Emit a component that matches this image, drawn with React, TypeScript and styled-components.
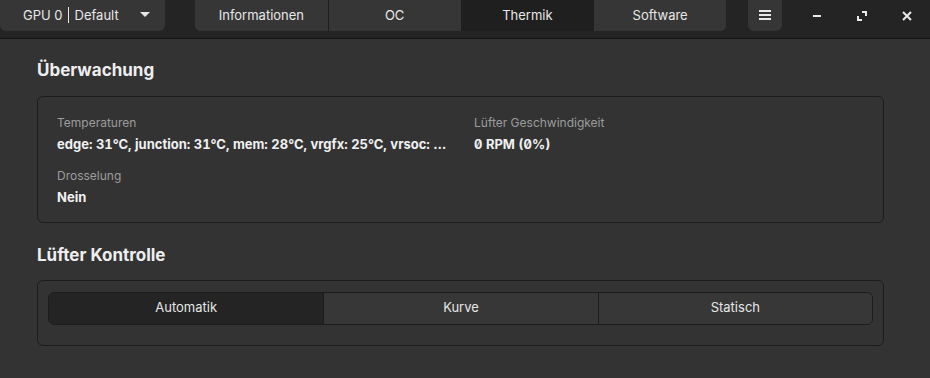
import React, { useState } from 'react';
import styled, { createGlobalStyle } from 'styled-components';

const GlobalStyle = createGlobalStyle`
  html, body {
    margin: 0;
    padding: 0;
    background: #333333;
    font-family: Inter, "Noto Sans", "DejaVu Sans", sans-serif;
    color: #eeeeee;
  }
  * { box-sizing: border-box; }
`;

const Window = styled.div`
  width: 930px;
  height: 378px;
  display: flex;
  flex-direction: column;
  background: #333333;
  overflow: hidden;
`;

const HeaderBar = styled.div`
  height: 39px;
  flex-shrink: 0;
  display: flex;
  align-items: flex-start;
  background: #242424;
  border-bottom: 1px solid #141414;
`;

const HeaderButton = styled.button<{ $width: number }>`
  width: ${p => p.$width}px;
  height: 31px;
  border: none;
  border-radius: 0 0 6px 6px;
  background: #363636;
  color: #e8e8e8;
  font-family: inherit;
  font-size: 13px;
  display: flex;
  align-items: center;
  justify-content: center;
  padding: 0 0 2px;
`;

const GpuButton = styled(HeaderButton)`
  justify-content: flex-start;
  padding-left: 23px;
`;

const Divider = styled.span`
  display: inline-block;
  width: 1px;
  height: 16px;
  background: #e8e8e8;
  margin: 0 6px 0 5px;
`;

const Caret = styled.span`
  margin-left: 21px;
  width: 0;
  height: 0;
  border-left: 5px solid transparent;
  border-right: 5px solid transparent;
  border-top: 5px solid #e8e8e8;
`;

const TabStrip = styled.div`
  margin-left: 30px;
  width: 531px;
  height: 31px;
  display: grid;
  grid-template-columns: repeat(4, 1fr);
  border-radius: 0 0 6px 6px;
  overflow: hidden;
  background: #363636;
`;

const Tab = styled.button<{ $active?: boolean }>`
  border: none;
  border-left: 1px solid #1f1f1f;
  &:first-child { border-left: none; }
  background: ${p => (p.$active ? '#1f1f1f' : '#363636')};
  color: #e8e8e8;
  font-family: inherit;
  font-size: 13px;
  padding: 0 0 2px;
`;

const MenuButton = styled(HeaderButton)`
  margin-left: 22px;
`;

const Controls = styled.div`
  display: flex;
  margin-left: 12px;
`;

const ControlButton = styled.div`
  width: 45px;
  height: 31px;
  display: flex;
  align-items: center;
  justify-content: center;
`;

const Content = styled.div`
  flex: 1;
  padding: 0 46px 0 37px;
`;

const SectionTitle = styled.h2<{ $top: number }>`
  margin: 0;
  padding-top: ${p => p.$top}px;
  height: 57px;
  font-size: 17px;
  font-weight: 700;
  color: #eeeeee;
  line-height: 20px;
`;

const Card = styled.div`
  border: 1px solid #1c1c1c;
  border-radius: 6px;
`;

const InfoGrid = styled.div`
  display: grid;
  grid-template-columns: 391px 1fr;
  column-gap: 26px;
  row-gap: 16px;
  padding: 18px 19px 17px;
`;

const Field = styled.div`
  display: flex;
  flex-direction: column;
  gap: 5px;
  min-width: 0;
`;

const Label = styled.div`
  font-size: 12px;
  line-height: 16px;
  color: #9c9c9c;
`;

const Value = styled.div`
  font-size: 13px;
  font-weight: 700;
  line-height: 16px;
  color: #f0f0f0;
  white-space: nowrap;
  font-feature-settings: "tnum", "zero";
`;

const FanCard = styled(Card)`
  padding: 11px 10px 20px;
`;

const Segmented = styled.div`
  display: grid;
  grid-template-columns: repeat(3, 1fr);
  height: 33px;
  border: 1px solid #1c1c1c;
  border-radius: 6px;
  overflow: hidden;
`;

const Segment = styled.button<{ $active?: boolean }>`
  border: none;
  border-left: 1px solid #1c1c1c;
  &:first-child { border-left: none; }
  background: ${p => (p.$active ? '#242424' : '#373737')};
  color: #e6e6e6;
  font-family: inherit;
  font-size: 13px;
  padding: 0 0 3px;
`;

const tabs = ['Informationen', 'OC', 'Thermik', 'Software'];
const modes = ['Automatik', 'Kurve', 'Statisch'];

export default function App() {
  const [tab, setTab] = useState('Thermik');
  const [mode, setMode] = useState('Automatik');

  return (
    <Window>
      <GlobalStyle />
      <HeaderBar>
        <GpuButton $width={165}>
          GPU 0<Divider />Default
          <Caret />
        </GpuButton>
        <TabStrip>
          {tabs.map(t => (
            <Tab key={t} $active={t === tab} onClick={() => setTab(t)}>
              {t}
            </Tab>
          ))}
        </TabStrip>
        <MenuButton $width={34}>
          <svg width="12" height="10" viewBox="0 0 12 10">
            <rect x="0" y="0" width="12" height="2" fill="#eaeaea" />
            <rect x="0" y="4" width="12" height="2" fill="#eaeaea" />
            <rect x="0" y="8" width="12" height="2" fill="#eaeaea" />
          </svg>
        </MenuButton>
        <Controls>
          <ControlButton>
            <svg width="10" height="10" viewBox="0 0 10 10">
              <rect x="1" y="4" width="8" height="2" fill="#eaeaea" />
            </svg>
          </ControlButton>
          <ControlButton>
            <svg width="10" height="10" viewBox="0 0 10 10" fill="none" stroke="#eaeaea" strokeWidth="2">
              <path d="M5 1 H9 V5" />
              <path d="M1 5 V9 H5" />
            </svg>
          </ControlButton>
          <ControlButton>
            <svg width="10" height="10" viewBox="0 0 10 10" stroke="#eaeaea" strokeWidth="2">
              <path d="M1 1 L9 9 M9 1 L1 9" />
            </svg>
          </ControlButton>
        </Controls>
      </HeaderBar>
      <Content>
        <SectionTitle $top={21}>Überwachung</SectionTitle>
        <Card>
          <InfoGrid>
            <Field>
              <Label>Temperaturen</Label>
              <Value>edge: 31°C, junction: 31°C, mem: 28°C, vrgfx: 25°C, vrsoc: …</Value>
            </Field>
            <Field>
              <Label>Lüfter Geschwindigkeit</Label>
              <Value>0 RPM (0%)</Value>
            </Field>
            <Field>
              <Label>Drosselung</Label>
              <Value>Nein</Value>
            </Field>
          </InfoGrid>
        </Card>
        <SectionTitle $top={22}>Lüfter Kontrolle</SectionTitle>
        <FanCard>
          <Segmented>
            {modes.map(m => (
              <Segment key={m} $active={m === mode} onClick={() => setMode(m)}>
                {m}
              </Segment>
            ))}
          </Segmented>
        </FanCard>
      </Content>
    </Window>
  );
}
